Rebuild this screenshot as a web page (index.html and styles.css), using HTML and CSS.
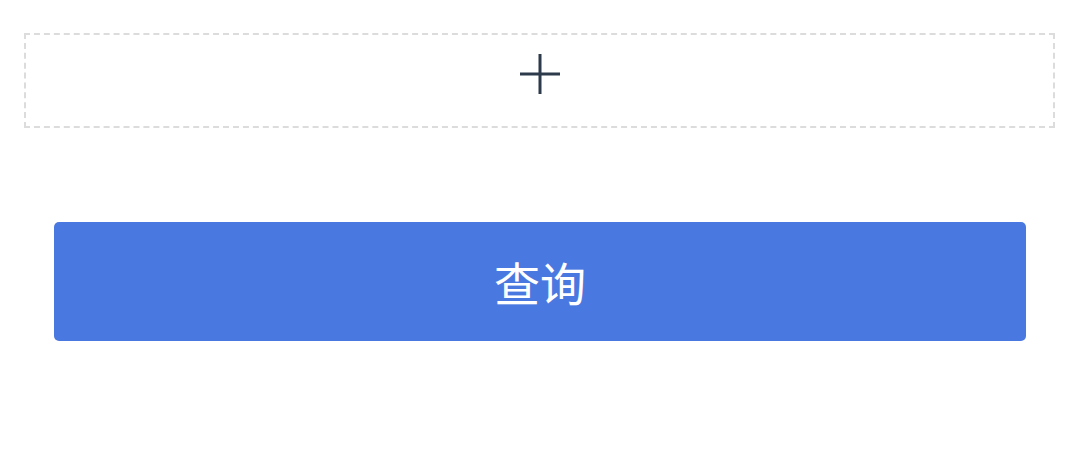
FILE: index.html
```html
<!DOCTYPE html>
<html lang="zh">
<head>
<meta charset="utf-8">
<title>查询</title>
<link rel="stylesheet" href="styles.css">
</head>
<body>
  <div class="page">
    <div class="add-box">
      <svg class="add-icon" width="40" height="40" viewBox="0 0 40 40" aria-hidden="true">
        <path d="M20 0V40M0 20H40" stroke="#2c3a4b" stroke-width="3" fill="none"/>
      </svg>
    </div>
    <button class="query-btn" type="button">查询</button>
  </div>
</body>
</html>
```

FILE: styles.css
```css
html, body {
  margin: 0;
  padding: 0;
  background: #ffffff;
}

.page {
  display: flex;
  flex-direction: column;
  padding: 33px 25px 0 24px;
  font-family: "Noto Sans CJK SC", "Noto Sans", sans-serif;
}

.add-box {
  box-sizing: border-box;
  height: 95px;
  border: 2px dashed #dcdcdc;
  display: flex;
  align-items: center;
  justify-content: center;
}

.add-icon {
  display: block;
  margin-top: -14px;
}

.query-btn {
  margin: 94px 29px 0 30px;
  height: 119px;
  border: none;
  border-radius: 5px;
  background: #4a78e1;
  color: #ffffff;
  font-family: "Noto Sans CJK SC", "Noto Sans", sans-serif;
  font-size: 46px;
  font-weight: 400;
  padding: 0 0 2px;
  cursor: pointer;
}
```
